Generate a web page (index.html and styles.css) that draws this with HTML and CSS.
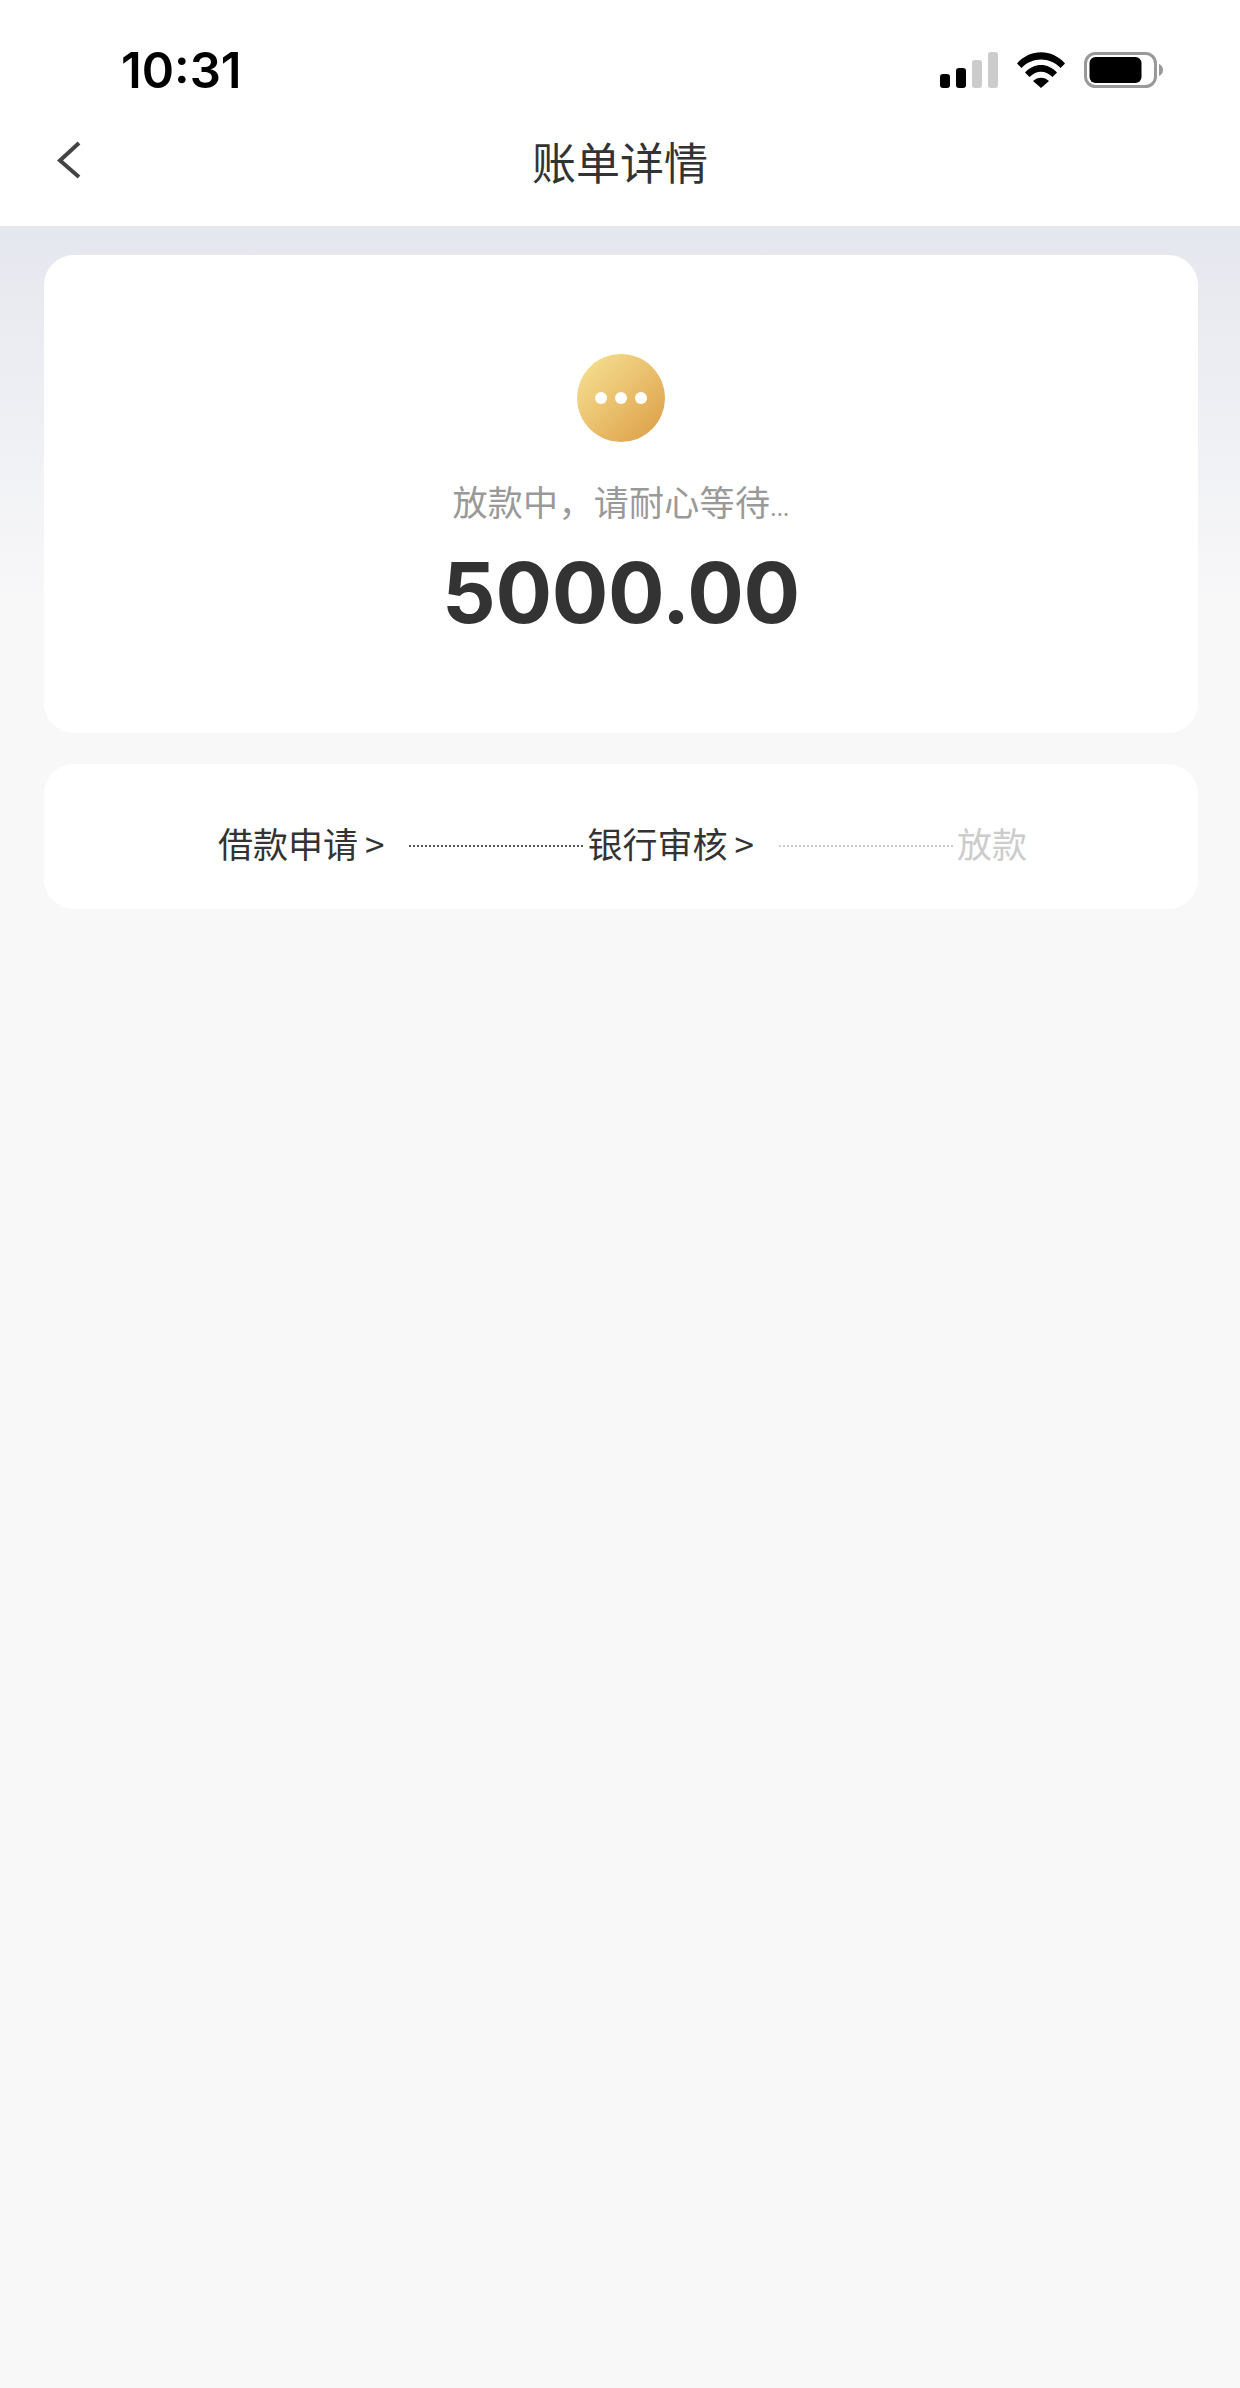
FILE: index.html
```html
<!DOCTYPE html>
<html lang="zh-CN">
	<head>
		<meta charset="utf-8">
		<meta name="viewport" content="width=device-width, initial-scale=1.0">
		<title>账单详情</title>
		<link rel="stylesheet" href="styles.css">
	</head>
	<body>
		<header class="top">
			<div class="status-bar">
				<span class="clock">10:31</span>
				<div class="status-icons">
					<div class="signal">
						<i class="bar bar-1"></i>
						<i class="bar bar-2"></i>
						<i class="bar bar-3 off"></i>
						<i class="bar bar-4 off"></i>
					</div>
					<svg class="wifi" width="48" height="36" viewBox="0 0 48 36">
						<path d="M0 11.5C13-3.5 35-3.5 48 11.5L43.5 16C33 4.5 15 4.5 4.5 16Z"/>
						<path d="M8 20.5C17 10.5 31 10.5 40 20.5L35.5 25C28 18 20 18 12.5 25Z"/>
						<path d="M16 29C20.5 24.5 27.5 24.5 32 29L24 36Z"/>
					</svg>
					<svg class="battery" width="79" height="36" viewBox="0 0 79 36">
						<rect x="1.5" y="1.5" width="70" height="33" rx="10" fill="none" stroke="#999" stroke-width="3"/>
						<rect x="5.5" y="5" width="52" height="26" rx="6"/>
						<path d="M75 12C77.5 13 79 15 79 18S77.5 23 75 24Z" fill="#999"/>
					</svg>
				</div>
			</div>
			<nav class="nav">
				<svg class="back" width="24" height="38" viewBox="0 0 24 38">
					<path d="M22 2L3 19.500L22 36" fill="none" stroke="#444" stroke-width="4"/>
				</svg>
				<h1 class="title">账单详情</h1>
			</nav>
		</header>
		<main class="content">
			<section class="card summary">
				<div class="state-icon">
					<i></i><i></i><i></i>
				</div>
				<p class="state-text">放款中，请耐心等待<span class="ellipsis">...</span></p>
				<p class="amount">5000.00</p>
			</section>
			<section class="card steps">
				<span class="step">借款申请<span class="arrow">&gt;</span></span>
				<span class="dots"></span>
				<span class="step">银行审核<span class="arrow">&gt;</span></span>
				<span class="dots pending"></span>
				<span class="step pending">放款</span>
			</section>
		</main>
	</body>
</html>
```

FILE: styles.css
```css
* {
	box-sizing: border-box;
}

body {
	margin: 0;
	min-height: 2388px;
	font-family: 'Noto Sans CJK SC', 'Inter', sans-serif;
	color: #333;
	background: #f8f8f9;
}

.top {
	height: 226px;
	background: #fff;
}

.status-bar {
	display: flex;
	justify-content: space-between;
	align-items: center;
	height: 122px;
	padding: 18px 77px 0 121px;
}

.clock {
	font-family: 'Inter', sans-serif;
	font-size: 49px;
	font-weight: 600;
	color: #000;
}

.status-icons {
	display: flex;
	align-items: flex-end;
	gap: 19px;
}

.signal {
	display: flex;
	align-items: flex-end;
	gap: 6px;
}

.bar {
	display: block;
	width: 10px;
	border-radius: 3px;
	background: #000;
}

.bar-1 { height: 14px; }
.bar-2 { height: 20px; }
.bar-3 { height: 28px; }
.bar-4 { height: 36px; }

.bar.off {
	background: #ccc;
}

.nav {
	position: relative;
	display: flex;
	justify-content: center;
	height: 104px;
}

.back {
	position: absolute;
	left: 57px;
	top: 19px;
}

.title {
	margin: 0;
	font-size: 44px;
	font-weight: 400;
	line-height: 78px;
	color: #333;
}

.content {
	display: flex;
	flex-direction: column;
	gap: 31px;
	padding: 29px 42px 29px 44px;
	height: 2162px;
	background: linear-gradient(#e5e7ee, #f8f8f9 380px);
}

.card {
	background: #fff;
	border-radius: 30px;
}

.summary {
	display: flex;
	flex-direction: column;
	align-items: center;
	height: 478px;
	padding-top: 99px;
}

.state-icon {
	display: flex;
	justify-content: center;
	align-items: center;
	gap: 8px;
	width: 88px;
	height: 88px;
	border-radius: 50%;
	background: linear-gradient(135deg, #f7e495, #dc9c45);
}

.state-icon i {
	width: 12px;
	height: 12px;
	border-radius: 50%;
	background: #fff;
}

.state-text {
	margin: 33px 0 0;
	font-size: 35px;
	letter-spacing: 0.3px;
	line-height: 52px;
	color: #999;
}

.ellipsis {
	font-size: 22px;
}

.amount {
	margin: 9px 0 0;
	font-family: 'Inter', sans-serif;
	font-size: 84px;
	font-weight: 700;
	letter-spacing: -0.3px;
	line-height: 104px;
	color: #333;
}

.steps {
	display: flex;
	align-items: center;
	height: 145px;
	padding: 12px 0 0 174px;
}

.step {
	font-size: 35px;
	line-height: 50px;
	white-space: nowrap;
}

.step.pending {
	color: #ccc;
}

.arrow {
	margin-left: 7px;
}

.dots {
	width: 174px;
	margin: 7px 4px 0 25px;
	border-top: 2px dotted #555;
}

.dots.pending {
	border-top-color: #ccc;
}
```
